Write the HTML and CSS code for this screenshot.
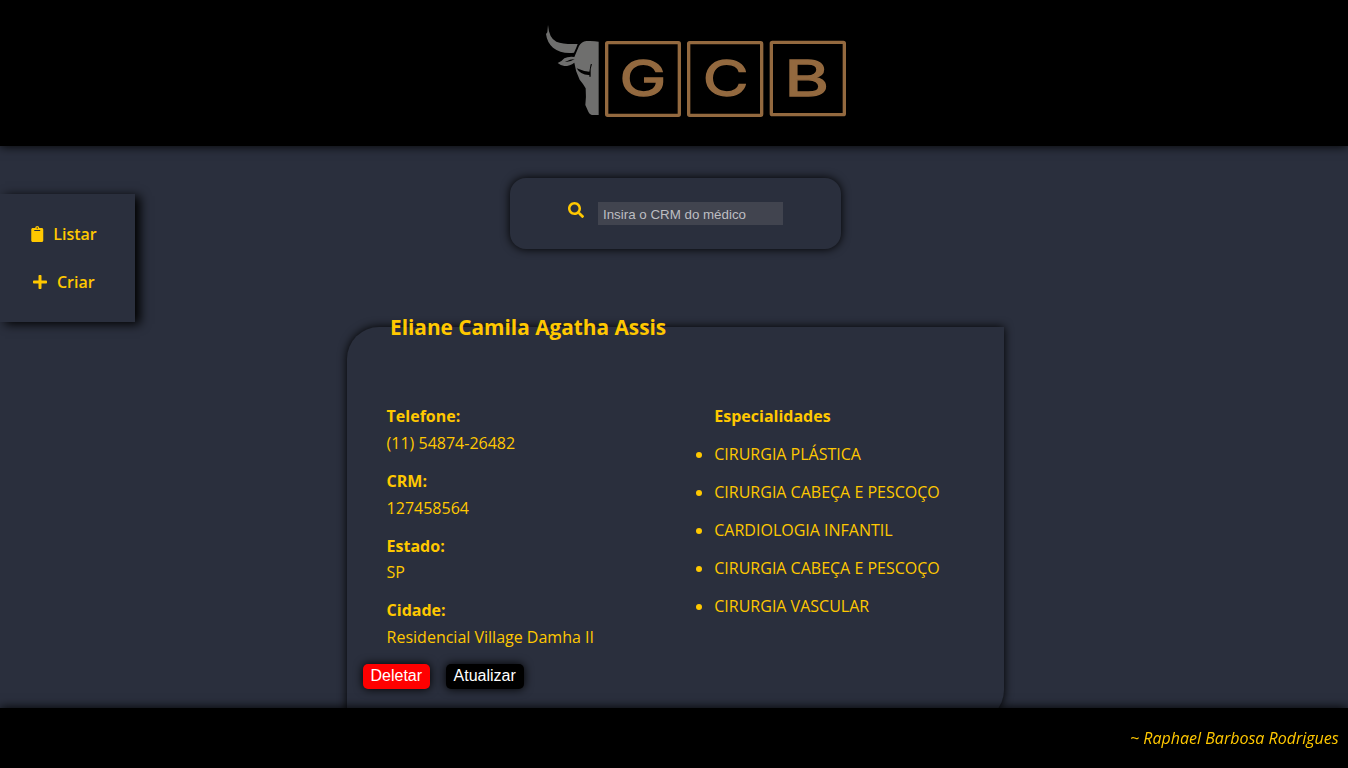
FILE: index.html
```html
<!DOCTYPE html>
<html lang="pt-BR">
<head>
<meta charset="utf-8">
<title>GCB</title>
<link rel="stylesheet" href="styles.css">
</head>
<body>
<header class="header">
  <svg class="logo" viewBox="0 0 960 345" role="img" aria-label="GCB">
    <g fill="#6f6f6e">
      <path d="M39 30Q42 70 64 80Q86 89 128 87Q124 99 117 113Q78 117 54 98Q36 82 33 57L37 52Z"/>
      <path d="M191 80V300H176Q164 300 160 290L151 270Q154 246 152 220Q146 208 134 194Q121 169 118 143Q105 153 88 153Q77 151 68 144Q80 140 88 130Q99 124 118 126L132 93Q140 79 154 78Q177 77 191 80Z"/>
    </g>
    <path d="M119 132Q106 132 90 141Q105 142 119 132M125 160Q145 169 163 170L167 148L171 147L167 162V185H163V180Q137 181 125 160Z"/>
    <g class="logo-frame">
      <rect x="215" y="83" width="218" height="218" rx="3"/>
      <rect x="461" y="83" width="219" height="218" rx="3"/>
      <rect x="709" y="82" width="219" height="217" rx="3"/>
    </g>
    <g class="logo-letter">
      <text transform="translate(324 244) scale(1.28 1)">G</text>
      <text transform="translate(572 244) scale(1.28 1)">C</text>
      <text transform="translate(815 244) scale(1.4 1)">B</text>
    </g>
  </svg>
</header>
<div class="page">
  <nav class="menu">
    <a class="menu-item"><svg class="icon-clip" viewBox="0 0 384 512"><path d="M384 112v352c0 26.500-21.500 48-48 48H48c-26.500 0-48-21.500-48-48V112c0-26.500 21.500-48 48-48h80c0-35.300 28.700-64 64-64s64 28.700 64 64h80c26.500 0 48 21.500 48 48zM192 40c-13.300 0-24 10.700-24 24s10.700 24 24 24 24-10.700 24-24-10.700-24-24-24m96 114v-20a6 6 0 0 0-6-6H102a6 6 0 0 0-6 6v20a6 6 0 0 0 6 6h180a6 6 0 0 0 6-6z"/></svg>Listar</a>
    <a class="menu-item"><svg class="icon-plus" viewBox="0 0 448 512"><path d="M416 208H272V64c0-17.670-14.330-32-32-32h-32c-17.670 0-32 14.330-32 32v144H32c-17.670 0-32 14.330-32 32v32c0 17.670 14.330 32 32 32h144v144c0 17.670 14.330 32 32 32h32c17.670 0 32-14.330 32-32V304h144c17.670 0 32-14.330 32-32v-32c0-17.670-14.330-32-32-32z"/></svg>Criar</a>
  </nav>
  <main class="content">
    <form class="search">
      <svg class="icon-search" viewBox="0 0 512 512"><path d="M505 442.700L405.300 343c-4.500-4.500-10.600-7-17-7H372c27.600-35.300 44-79.700 44-128C416 93.100 322.900 0 208 0S0 93.100 0 208s93.100 208 208 208c48.300 0 92.700-16.400 128-44v16.300c0 6.400 2.500 12.500 7 17l99.700 99.700c9.400 9.400 24.600 9.400 33.900 0l28.300-28.300c9.400-9.400 9.400-24.600.1-34zM208 336c-70.700 0-128-57.200-128-128 0-70.700 57.200-128 128-128 70.700 0 128 57.200 128 128 0 70.700-57.200 128-128 128z"/></svg>
      <input class="search-input" type="text" placeholder="Insira o CRM do médico">
    </form>
    <article class="card">
      <h2 class="name">Eliane Camila Agatha Assis</h2>
      <div class="details">
        <dl class="info">
          <dt>Telefone:</dt><dd>(11) 54874-26482</dd>
          <dt>CRM:</dt><dd>127458564</dd>
          <dt>Estado:</dt><dd>SP</dd>
          <dt>Cidade:</dt><dd>Residencial Village Damha II</dd>
        </dl>
        <section>
          <strong>Especialidades</strong>
          <ul class="specialties">
            <li>CIRURGIA PLÁSTICA</li>
            <li>CIRURGIA CABEÇA E PESCOÇO</li>
            <li>CARDIOLOGIA INFANTIL</li>
            <li>CIRURGIA CABEÇA E PESCOÇO</li>
            <li>CIRURGIA VASCULAR</li>
          </ul>
        </section>
      </div>
      <div class="actions">
        <button class="button button-delete">Deletar</button>
        <button class="button button-update">Atualizar</button>
      </div>
    </article>
  </main>
</div>
<footer class="footer">~ Raphael Barbosa Rodrigues</footer>
</body>
</html>
```
FILE: styles.css
```css
* { box-sizing: border-box; margin: 0; padding: 0; }
body {
  height: 768px;
  overflow: hidden;
  background: #2a2f3d;
  color: #ffc800;
  font: 16px/22px "Open Sans", sans-serif;
}
svg { fill: currentColor; flex: none; }
.header {
  height: 146px;
  padding: 15px 0 0 535px;
  background: #000;
  box-shadow: 0 0 10px #000;
}
.logo { display: block; width: 320px; height: 115px; }
.logo > path { fill: #000; }
.logo-frame { fill: none; stroke: #93693f; stroke-width: 10px; }
.logo-letter {
  fill: #93693f;
  stroke: #93693f;
  stroke-width: 4px;
  font: 400 147px Inter, sans-serif;
  text-anchor: middle;
}
.page {
  display: grid;
  grid-template-columns: 135px 657px;
  column-gap: 212px;
  align-items: start;
}
.menu {
  display: flex;
  flex-direction: column;
  gap: 26px;
  height: 128px;
  margin-top: 48px;
  padding-top: 29px;
  box-shadow: 5px 2px 10px #000;
}
.menu-item {
  display: flex;
  align-items: center;
  justify-content: center;
  gap: 9.500px;
  padding-right: 7px;
  font-weight: 600;
}
.icon-clip { width: 12.500px; height: 16px; }
.icon-plus { width: 14px; height: 16px; }
.content { padding-top: 32px; }
.search {
  display: flex;
  gap: 14px;
  width: 331px;
  height: 71px;
  margin: 0 auto 78px;
  padding: 24px 58px;
  border-radius: 16px;
  box-shadow: 0 0 10px #000;
}
.icon-search { width: 16px; height: 16px; }
.search-input {
  width: 185px;
  height: 23px;
  padding: 3px 5px 1px;
  border: 0;
  background: #41444f;
  font: 13.333px "Liberation Sans", sans-serif;
}
.search-input::placeholder { color: #bdbec2; }
.card {
  display: flow-root;
  height: 395px;
  border-radius: 32px 0;
  box-shadow: 0 0 10px #000;
}
.name {
  height: 78px;
  margin-top: -14px;
  padding-left: 43px;
  font-size: 20.800px;
  line-height: 28px;
}
.details {
  display: grid;
  grid-template-columns: 327.700px 1fr;
  padding-left: 39.600px;
  height: 273px;
  padding-top: 14.200px;
}
.info dt { margin-bottom: 4.670px; font-weight: 700; }
.info dd { margin-bottom: 16px; }
.specialties li { margin-top: 16px; }
.actions { display: flex; gap: 15.700px; padding-left: 15.600px; }
.button {
  height: 25px;
  padding: 0 7.900px 2px;
  border: 0;
  border-radius: 5px;
  color: #fff;
  font: 16px "Liberation Sans", sans-serif;
  box-shadow: 0 0 10px #000;
}
.button-delete { background: #f00; }
.button-update { background: #000; }
.footer {
  position: fixed;
  inset: auto 0 0;
  height: 60px;
  padding: 19px 9.300px;
  background: #000;
  box-shadow: 0 0 10px #000;
  font-style: italic;
  text-align: right;
}
```
